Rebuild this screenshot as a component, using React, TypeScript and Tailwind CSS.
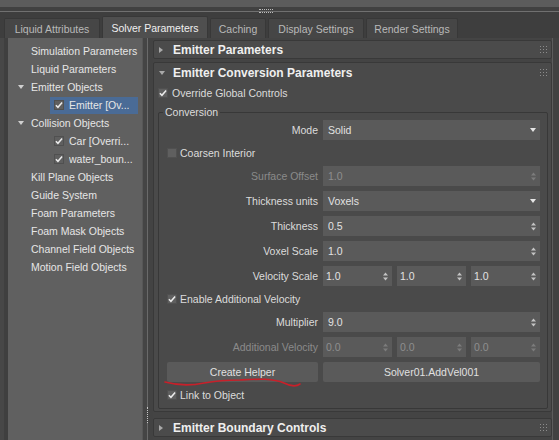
import React from 'react';

const tabs = [
  { label: 'Liquid Attributes', w: 'w-[96px]' },
  { label: 'Solver Parameters', w: 'w-[106px]', active: true },
  { label: 'Caching', w: 'w-[56px]' },
  { label: 'Display Settings', w: 'w-[96px]' },
  { label: 'Render Settings', w: 'w-[92px]' },
];

type TreeItem = {
  label: string;
  child?: boolean;
  open?: boolean;
  selected?: boolean;
};

const tree: TreeItem[] = [
  { label: 'Simulation Parameters' },
  { label: 'Liquid Parameters' },
  { label: 'Emitter Objects', open: true },
  { label: 'Emitter [Ov...', child: true, selected: true },
  { label: 'Collision Objects', open: true },
  { label: 'Car [Overri...', child: true },
  { label: 'water_boun...', child: true },
  { label: 'Kill Plane Objects' },
  { label: 'Guide System' },
  { label: 'Foam Parameters' },
  { label: 'Foam Mask Objects' },
  { label: 'Channel Field Objects' },
  { label: 'Motion Field Objects' },
];

function Check({ checked }: { checked?: boolean }) {
  return (
    <span className="flex h-[10px] w-[10px] shrink-0 items-center justify-center border border-[#505050] bg-[#5f5f5f]">
      {checked && (
        <svg width="9" height="8" viewBox="0 0 9 8">
          <path d="M1 4.3 L3.3 6.6 L8 1.2" fill="none" stroke="#ececec" strokeWidth="1.7" />
        </svg>
      )}
    </span>
  );
}

function Spin({ dim }: { dim?: boolean }) {
  return (
    <svg width="5" height="9" viewBox="0 0 5 9">
      <path d="M2.5 0.5 L5 3.5 L0 3.5Z M2.5 8.5 L5 5.5 L0 5.5Z" fill={dim ? '#7c7c7c' : '#c4c4c4'} />
    </svg>
  );
}

function DropArrow() {
  return (
    <svg width="6" height="4" viewBox="0 0 6 4">
      <path d="M0 0 L6 0 L3 4Z" fill="#e6e6e6" />
    </svg>
  );
}

function Grip() {
  return (
    <svg width="7" height="7" viewBox="0 0 7 7">
      {[0, 3, 6].map((y) =>
        [0, 3, 6].map((x) => <rect key={`${x}-${y}`} x={x} y={y} width="1" height="1" fill="#8c8c8c" />)
      )}
    </svg>
  );
}

function Field({
  value,
  kind = 'spin',
  disabled,
  small,
}: {
  value: string;
  kind?: 'spin' | 'drop';
  disabled?: boolean;
  small?: boolean;
}) {
  return (
    <div
      className={`flex h-[20px] min-w-0 flex-1 items-center justify-between bg-[#5a5a5a] pr-[4px] ${
        small ? 'pl-[3px]' : 'pl-[5px]'
      } ${disabled ? 'text-[#8e8e8e]' : 'text-[#e2e2e2]'}`}
    >
      <span>{value}</span>
      {kind === 'drop' ? <DropArrow /> : <Spin dim={disabled} />}
    </div>
  );
}

function Row({ label, disabled, children }: { label: string; disabled?: boolean; children: React.ReactNode }) {
  return (
    <div className="flex h-[20px] items-center gap-[5px]">
      <span className={`w-[151px] shrink-0 text-right ${disabled ? 'text-[#8a8a8a]' : 'text-[#dcdcdc]'}`}>{label}</span>
      <div className="flex flex-1 gap-[5px]">{children}</div>
    </div>
  );
}

function CheckRow({ label, checked }: { label: string; checked?: boolean }) {
  return (
    <div className="flex h-[16px] items-center gap-[3px]">
      <Check checked={checked} />
      <span className="text-[#dcdcdc]">{label}</span>
    </div>
  );
}

function RolloutHeader({ title, open, h }: { title: string; open?: boolean; h: string }) {
  return (
    <div className={`flex ${h} items-center justify-between pl-[5px] pr-[4px]`}>
      <div className="flex items-center">
        <span className="flex w-[14px] items-center">
          {open ? (
            <svg width="6" height="4" viewBox="0 0 6 4">
              <path d="M0 0 L6 0 L3 4Z" fill="#a9a9a9" />
            </svg>
          ) : (
            <svg width="4" height="6" viewBox="0 0 4 6">
              <path d="M0 0 L4 3 L0 6Z" fill="#a9a9a9" />
            </svg>
          )}
        </span>
        <span className="text-[12px] font-bold text-[#efefef]">{title}</span>
      </div>
      <Grip />
    </div>
  );
}

function Sidebar() {
  return (
    <div className="w-[135px] shrink-0 border-r border-[#575757] bg-[#606060] pt-[4px]">
      {tree.map((item) =>
        item.child ? (
          <div key={item.label} className="flex h-[18px] items-center">
            <div
              className={`ml-[42px] flex h-[17px] w-[88px] items-center gap-[5px] pl-[4px] ${
                item.selected ? 'bg-[#4a6b96]' : ''
              }`}
            >
              <Check checked />
              <span className="truncate text-[#e6e6e6]">{item.label}</span>
            </div>
          </div>
        ) : (
          <div key={item.label} className="flex h-[18px] items-center">
            <span className="flex w-[23px] items-center pl-[10px]">
              {item.open && (
                <svg width="6" height="4" viewBox="0 0 6 4">
                  <path d="M0 0 L6 0 L3 4Z" fill="#d0d0d0" />
                </svg>
              )}
            </span>
            <span className="text-[#e6e6e6]">{item.label}</span>
          </div>
        )
      )}
    </div>
  );
}

export default function App() {
  return (
    <div className="h-[440px] w-[559px] overflow-hidden bg-[#444444] font-['Liberation_Sans',Arial,sans-serif] text-[10.5px] leading-[12px] text-[#dadada]">
      {/* top strip */}
      <div className="h-[7px] bg-[#5c5c5c]" />
      <div className="h-[4px] bg-[#414141]" />
      <div className="relative h-px bg-[#707070]">
        <div className="absolute -top-[2px] left-[259px] h-[4px] w-[14px] border-y border-dotted border-[#bdbdbd]" />
      </div>
      <div className="h-[4px] bg-[#3e3e3e]" />

      {/* tabs */}
      <div className="flex h-[22px] items-end gap-[2px] bg-[#3e3e3e] pl-[4px]">
        {tabs.map((t) => (
          <div
            key={t.label}
            className={`${t.w} flex items-center justify-center rounded-t-[2px] border-x border-t border-[#383838] ${
              t.active ? 'h-[22px] bg-[#4f4f4f] text-[#f0f0f0]' : 'h-[20px] bg-[#464646] text-[#b9b9b9]'
            }`}
          >
            {t.label}
          </div>
        ))}
      </div>

      {/* body */}
      <div className="flex h-[402px]">
        <div className="flex w-[8px] shrink-0">
          <div className="w-[4px] bg-[#474747]" />
          <div className="w-[4px] bg-[#3f3f3f]" />
        </div>
        <Sidebar />

        {/* splitter */}
        <div className="flex w-[10px] shrink-0 bg-[#454545]">
          <div className="w-[4px]" />
          <div className="flex w-px flex-col">
            <div className="h-[369px] bg-[#6a6a6a]" />
            <div className="h-[16px] border-l border-dotted border-[#c8c8c8]" />
            <div className="flex-1 bg-[#6a6a6a]" />
          </div>
          <div className="w-[5px] bg-[#434343]" />
        </div>

        {/* rollouts */}
        <div className="relative flex w-[399px] shrink-0 flex-col pt-[2px]">
          <div className="rounded-[2px] border border-[#393939] bg-[#4b4b4b]">
            <RolloutHeader title="Emitter Parameters" h="h-[17px]" />
          </div>

          <div className="mt-[3px] rounded-[2px] border border-[#393939] bg-[#4a4a4a]">
            <RolloutHeader title="Emitter Conversion Parameters" open h="h-[19px]" />
            <div className="pb-[2px] pl-[4px] pr-[3px] pt-[3px]">
              <div className="flex h-[16px] items-center gap-[4px]">
                <Check checked />
                <span className="text-[#dcdcdc]">Override Global Controls</span>
              </div>

              <fieldset className="mt-[5px] rounded-[2px] border border-[#383838] pb-[5px] pl-[8px] pr-[7px]">
                <legend className="ml-[-4px] px-[2px] leading-[12px] text-[#dcdcdc]">Conversion</legend>
                <div className="flex flex-col gap-[5px] pt-[2px]">
                  <Row label="Mode">
                    <Field value="Solid" kind="drop" />
                  </Row>
                  <CheckRow label="Coarsen Interior" />
                  <Row label="Surface Offset" disabled>
                    <Field value="1.0" disabled />
                  </Row>
                  <Row label="Thickness units">
                    <Field value="Voxels" kind="drop" />
                  </Row>
                  <Row label="Thickness">
                    <Field value="0.5" />
                  </Row>
                  <Row label="Voxel Scale">
                    <Field value="1.0" />
                  </Row>
                  <Row label="Velocity Scale">
                    <Field value="1.0" small />
                    <Field value="1.0" small />
                    <Field value="1.0" small />
                  </Row>
                  <CheckRow label="Enable Additional Velocity" checked />
                  <Row label="Multiplier">
                    <Field value="9.0" />
                  </Row>
                  <Row label="Additional Velocity" disabled>
                    <Field value="0.0" small disabled />
                    <Field value="0.0" small disabled />
                    <Field value="0.0" small disabled />
                  </Row>
                  <div className="flex h-[20px] gap-[5px]">
                    <button className="w-[151px] shrink-0 rounded-[2px] bg-[#5a5a5a] text-[#e0e0e0]">Create Helper</button>
                    <button className="flex-1 rounded-[2px] bg-[#5a5a5a] text-[#e0e0e0]">Solver01.AddVel001</button>
                  </div>
                  <CheckRow label="Link to Object" checked />
                </div>
              </fieldset>
            </div>
          </div>

          <div className="mt-[6px] rounded-[2px] border border-[#393939] bg-[#4b4b4b]">
            <RolloutHeader title="Emitter Boundary Controls" h="h-[17px]" />
          </div>

          {/* red pen annotation */}
          <svg className="pointer-events-none absolute left-0 top-0" width="399" height="402" viewBox="153 38 399 402">
            <path
              d="M165 382 C176 385 190 386 204 383 C215 381 226 380 240 380 C258 379 272 378 284 383 C290 386 296 387 300 384"
              fill="none"
              stroke="#c8202a"
              strokeWidth="1.6"
              strokeLinecap="round"
            />
          </svg>
        </div>

        <div className="w-[7px] shrink-0 border-l border-[#5c5c5c] bg-[#414141]" />
      </div>
    </div>
  );
}
